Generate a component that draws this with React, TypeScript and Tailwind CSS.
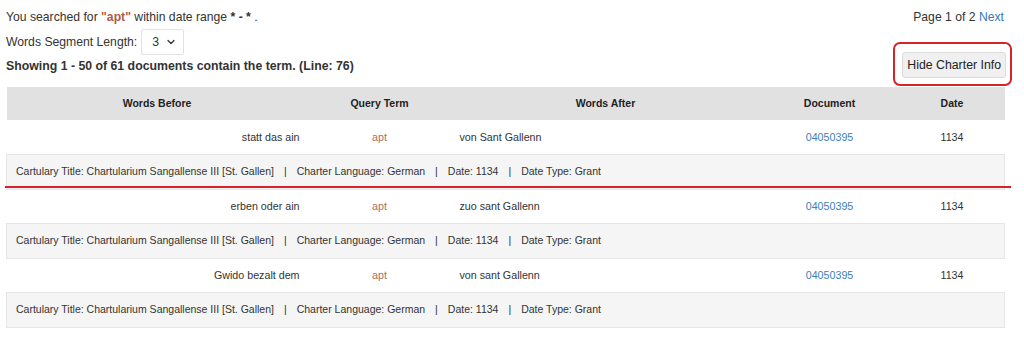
import { Fragment } from 'react'
import { ChevronDown } from 'lucide-react'

const rows = [
  { before: 'statt das ain', after: 'von Sant Gallenn' },
  { before: 'erben oder ain', after: 'zuo sant Gallenn' },
  { before: 'Gwido bezalt dem', after: 'von sant Gallenn' },
]

function InfoRow({ marked }: { marked?: boolean }) {
  return (
    <tr>
      <td
        colSpan={5}
        className="relative h-[35px] border border-[#e6e6e6] bg-[#f5f5f5] px-[9px] text-[10.5px] text-[#333]"
      >
        Cartulary Title: Chartularium Sangallense III [St. Gallen]
        <span className="px-[10px]">|</span>Charter Language: German
        <span className="px-[10px]">|</span>Date: 1134
        <span className="px-[10px]">|</span>Date Type: Grant
        {/* red annotation underline */}
        {marked && (
          <span className="absolute left-[-2px] right-[-7px] bottom-[1px] h-[2px] bg-[#d9232a]" />
        )}
      </td>
    </tr>
  )
}

export default function App() {
  return (
    <div
      className="h-[344px] w-[1024px] overflow-hidden bg-white px-[6px] text-[#333]"
      style={{ fontFamily: '"Liberation Sans", Arial, sans-serif' }}
    >
      <div className="flex items-start justify-between pt-[8px] text-[12.2px] leading-[18px]">
        <div>
          You searched for <span className="font-bold text-[#b35a45]">"apt"</span> within date range{' '}
          <span className="font-bold">* - *</span> .
        </div>
        <div className="pr-[14px]">
          Page 1 of 2 <span className="text-[#337ab7]">Next</span>
        </div>
      </div>

      <div className="flex items-end justify-between">
        <div>
          <div className="mt-[3px] flex items-center gap-[4px] text-[12.2px]">
            <span>Words Segment Length:</span>
            <div className="flex h-[26px] w-[43px] items-center justify-between rounded-[2px] border border-[#e2e2e2] bg-white pl-[10px] pr-[6px]">
              <span>3</span>
              <ChevronDown className="h-[12px] w-[12px]" strokeWidth={2.5} />
            </div>
          </div>
          <div className="mb-[12px] mt-[2px] text-[12.3px] font-bold leading-[18px]">
            Showing 1 - 50 of 61 documents contain the term. (Line: 76)
          </div>
        </div>
        {/* red annotation box */}
        <div className="mb-[1px] mr-[6px] rounded-[7px] border-2 border-[#d9232a] pb-[6px] pl-[7px] pr-[4px] pt-[8px]">
          <button className="h-[26px] rounded-[3px] border border-[#dcdcdc] bg-[#f0f0f0] px-[4px] text-[12.3px] text-[#222]">
            Hide Charter Info
          </button>
        </div>
      </div>

      <table className="w-[998px] table-fixed border-collapse text-[10.7px]">
        <colgroup>
          <col className="w-[301px]" />
          <col className="w-[144px]" />
          <col className="w-[308px]" />
          <col className="w-[140px]" />
          <col className="w-[105px]" />
        </colgroup>
        <thead>
          <tr className="h-[33px] bg-[#e1e1e1] text-[10.5px] font-bold text-[#222]">
            <th>Words Before</th>
            <th>Query Term</th>
            <th>Words After</th>
            <th>Document</th>
            <th>Date</th>
          </tr>
        </thead>
        <tbody>
          {rows.map((r, i) => (
            <Fragment key={i}>
              <tr className="h-[34px]">
                <td className="px-[8px] text-right">{r.before}</td>
                <td className="text-center text-[#a7705f]">apt</td>
                <td className="px-[8px] text-left">{r.after}</td>
                <td className="text-center text-[#3a7fb8]">04050395</td>
                <td className="text-center">1134</td>
              </tr>
              <InfoRow marked={i === 0} />
            </Fragment>
          ))}
        </tbody>
      </table>
    </div>
  )
}
